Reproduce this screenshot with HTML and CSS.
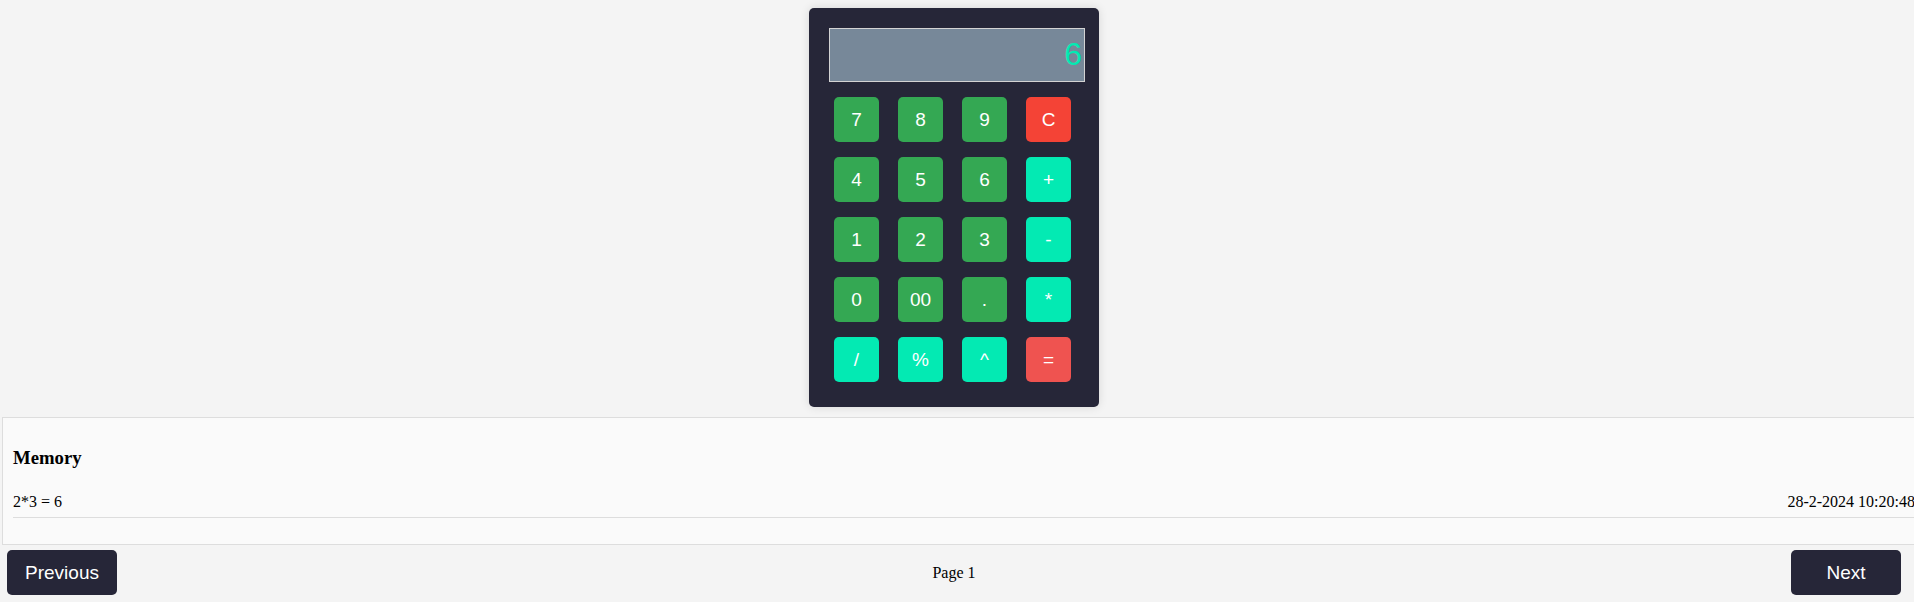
FILE: index.html
```html
<!DOCTYPE html>
<html>
<head>
<meta charset="utf-8">
<link rel="stylesheet" href="styles.css">
</head>
<body>
<div class="app">
  <div class="calc-wrap">
    <div class="calc">
      <div class="display">6</div>
      <div class="keys">
        <button class="key num">7</button>
        <button class="key num">8</button>
        <button class="key num">9</button>
        <button class="key clear">C</button>
        <button class="key num">4</button>
        <button class="key num">5</button>
        <button class="key num">6</button>
        <button class="key op">+</button>
        <button class="key num">1</button>
        <button class="key num">2</button>
        <button class="key num">3</button>
        <button class="key op">-</button>
        <button class="key num">0</button>
        <button class="key num">00</button>
        <button class="key num">.</button>
        <button class="key op">*</button>
        <button class="key op">/</button>
        <button class="key op">%</button>
        <button class="key op">^</button>
        <button class="key eq">=</button>
      </div>
    </div>
  </div>
  <div class="memory">
    <h3 class="memory-title">Memory</h3>
    <ul class="memory-list">
      <li class="memory-row"><span>2*3 = 6</span><span>28-2-2024 10:20:48</span></li>
    </ul>
  </div>
  <div class="pager">
    <button class="pager-btn">Previous</button>
    <span class="pager-label">Page 1</span>
    <button class="pager-btn">Next</button>
  </div>
</div>
</body>
</html>
```

FILE: styles.css
```css
html, body {
  margin: 0;
  padding: 0;
  overflow: hidden;
  background: #f4f4f4;
  font-family: "Liberation Serif", "Times New Roman", serif;
  font-size: 16px;
  color: #000;
}

.app {
  width: 1908px;
}

.calc-wrap {
  display: flex;
  justify-content: center;
  padding-top: 8px;
}

.calc {
  width: 290px;
  box-sizing: border-box;
  padding: 20px 14px 25px 20px;
  background: #262638;
  border-radius: 5px;
  box-shadow: 0 0 10px rgba(0, 0, 0, 0.12);
}

.display {
  width: 256px;
  height: 54px;
  box-sizing: border-box;
  border: 1px solid #d3d3d3;
  background: #778899;
  color: #03eab3;
  font-family: "Liberation Sans", Arial, sans-serif;
  font-size: 32px;
  line-height: 50px;
  text-align: right;
  padding-right: 2px;
}

.keys {
  display: grid;
  grid-template-columns: repeat(4, 45px);
  grid-auto-rows: 45px;
  column-gap: 19px;
  row-gap: 15px;
  margin-top: 15px;
  padding-left: 5px;
}

.key {
  border: none;
  border-radius: 5px;
  padding: 0;
  color: #fff;
  font-family: "Liberation Sans", Arial, sans-serif;
  font-size: 19px;
}

.num { background: #34a853; }
.op { background: #03eab3; }
.clear { background: #f44336; }
.eq { background: #ef5350; }

.memory {
  margin: 10px 0 0 2px;
  width: 1902px;
  padding: 10px;
  border: 1px solid #ddd;
  background: #fafafa;
}

.memory-title {
  margin: 18.72px 0;
  font-size: 18.72px;
  font-weight: bold;
}

.memory-list {
  list-style: none;
  margin: 0 0 16px;
  padding: 0;
}

.memory-row {
  display: flex;
  justify-content: space-between;
  padding: 6px 0;
  border-bottom: 1px solid #ddd;
}

.pager {
  display: flex;
  justify-content: space-between;
  align-items: center;
  margin-top: 5px;
  padding: 0 7px;
}

.pager-btn {
  width: 110px;
  height: 45px;
  border: none;
  border-radius: 5px;
  background: #262638;
  color: #fff;
  font-family: "Liberation Sans", Arial, sans-serif;
  font-size: 19px;
  padding: 0;
}

.pager-label {
  font-size: 16px;
}
```
